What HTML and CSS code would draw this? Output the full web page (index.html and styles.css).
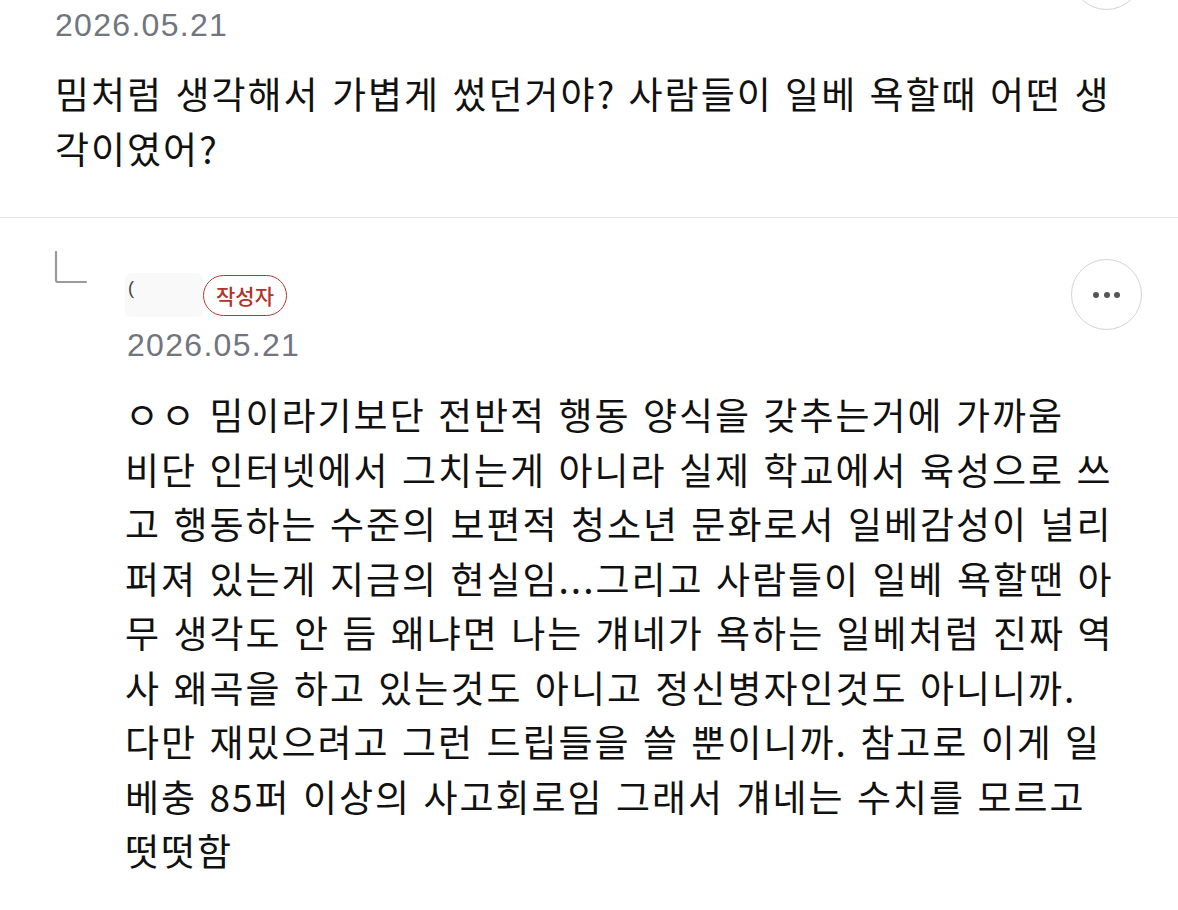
FILE: index.html
```html
<!DOCTYPE html>
<html lang="ko">
<head>
<meta charset="utf-8">
<title>댓글</title>
<link rel="stylesheet" href="styles.css">
</head>
<body>
<div class="thread">
  <div class="comment top">
    <div class="content">
      <div class="head">
        <div class="name"></div>
        <button class="more" aria-label="더보기"><span></span><span></span><span></span></button>
      </div>
      <div class="date">2026.05.21</div>
      <p class="text">밈처럼 생각해서 가볍게 썼던거야? 사람들이 일베 욕할때 어떤 생<br>각이였어?</p>
    </div>
  </div>
  <div class="comment reply">
    <div class="reply-icon">
      <svg width="33" height="33" viewBox="0 0 33 33"><path d="M2 1 V29 Q2 31 4 31 H32" fill="none" stroke="#9b9b9b" stroke-width="2.2" stroke-linecap="round"/></svg>
    </div>
    <div class="content">
      <div class="head">
        <div class="name"><span class="name-mark">(</span></div>
        <span class="badge">작성자</span>
        <button class="more" aria-label="더보기"><span></span><span></span><span></span></button>
      </div>
      <div class="date">2026.05.21</div>
      <p class="text">ㅇㅇ 밈이라기보단 전반적 행동 양식을 갖추는거에 가까움<br>비단 인터넷에서 그치는게 아니라 실제 학교에서 육성으로 쓰<br>고 행동하는 수준의 보편적 청소년 문화로서 일베감성이 널리<br>퍼져 있는게 지금의 현실임...그리고 사람들이 일베 욕할땐 아<br>무 생각도 안 듬 왜냐면 나는 걔네가 욕하는 일베처럼 진짜 역<br>사 왜곡을 하고 있는것도 아니고 정신병자인것도 아니니까.<br>다만 재밌으려고 그런 드립들을 쓸 뿐이니까. 참고로 이게 일<br>베충 85퍼 이상의 사고회로임 그래서 걔네는 수치를 모르고<br>떳떳함</p>
    </div>
  </div>
</div>
</body>
</html>
```

FILE: styles.css
```css
* { box-sizing: border-box; }
html, body { margin: 0; padding: 0; background: #fff; }
body {
  font-family: "Noto Sans CJK KR", "Noto Sans", sans-serif;
  color: #111;
  overflow: hidden;
}
.thread { margin-top: -102px; }
.comment {
  display: flex;
  padding: 55px 36px 42px 55px;
}
.comment.top { border-bottom: 1px solid #e2e2e2; }
.comment.reply { padding-top: 33px; padding-left: 54px; }
.reply-icon { width: 71px; flex: none; }
.reply-icon svg { display: block; }
.reply .content { padding-top: 22px; }
.content { flex: 1; min-width: 0; }
.head {
  display: flex;
  align-items: center;
  height: 44px;
}
.name {
  width: 78px;
  height: 44px;
  background: #f9f9f9;
  border-radius: 6px;
  display: flex;
  align-items: flex-start;
  padding: 6px 0 0 3px;
}
.name-mark {
  font-family: "Liberation Sans", sans-serif;
  font-size: 18px;
  line-height: 18px;
  color: #444;
}
.badge {
  display: inline-flex;
  align-items: center;
  justify-content: center;
  width: 84px;
  height: 41px;
  border: 1.5px solid #b5362e;
  border-radius: 21px;
  color: #b3322b;
  font-size: 21px;
  font-weight: 500;
}
.more {
  margin: -14px 0 -13px auto;
  width: 71px;
  height: 71px;
  flex: none;
  border: 1.5px solid #d4d4d4;
  border-radius: 50%;
  background: #fff;
  display: flex;
  align-items: center;
  justify-content: center;
  gap: 4.5px;
  padding: 0;
}
.more span {
  width: 6px;
  height: 6px;
  border-radius: 50%;
  background: #555;
}
.date {
  margin-top: 8px;
  font-family: "Liberation Sans", sans-serif;
  font-size: 32px;
  line-height: 40px;
  letter-spacing: 1.3px;
  color: #71757e;
}
.reply .date { padding-left: 2px; }
.text {
  margin: 21px 0 0;
  font-size: 37px;
  line-height: 54.5px;
  letter-spacing: 2px;
  white-space: nowrap;
}
.reply .text { margin-top: 22px; }
```
